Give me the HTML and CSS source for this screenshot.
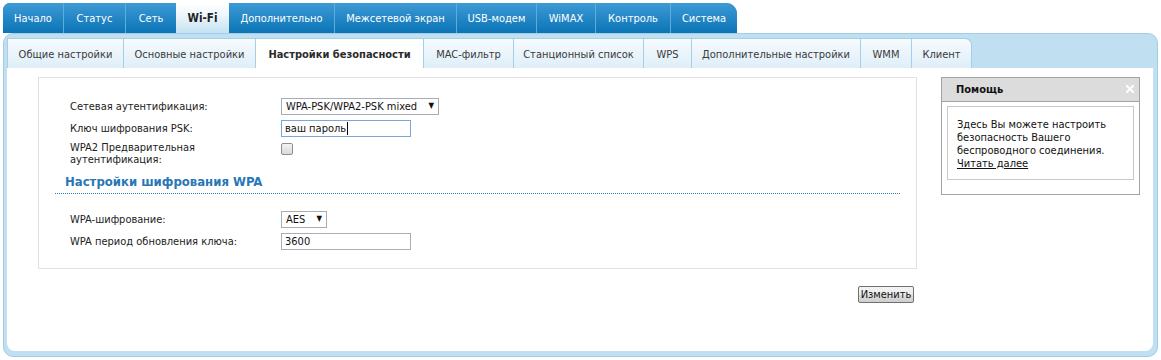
FILE: index.html
```html
<!DOCTYPE html>
<html lang="ru">
<head>
<meta charset="utf-8">
<title>Wi-Fi — Настройки безопасности</title>
<link rel="stylesheet" href="styles.css">
</head>
<body>
<div class="page">
  <nav class="topnav">
    <a class="tab">Начало</a>
    <a class="tab">Статус</a>
    <a class="tab">Сеть</a>
    <a class="tab active">Wi-Fi</a>
    <a class="tab">Дополнительно</a>
    <a class="tab">Межсетевой экран</a>
    <a class="tab">USB-модем</a>
    <a class="tab">WiMAX</a>
    <a class="tab">Контроль</a>
    <a class="tab last">Система</a>
  </nav>
  <div class="frame">
    <nav class="subnav">
      <a class="subtab">Общие настройки</a>
      <a class="subtab">Основные настройки</a>
      <a class="subtab active">Настройки безопасности</a>
      <a class="subtab">MAC-фильтр</a>
      <a class="subtab">Станционный список</a>
      <a class="subtab">WPS</a>
      <a class="subtab">Дополнительные настройки</a>
      <a class="subtab">WMM</a>
      <a class="subtab last">Клиент</a>
    </nav>
    <div class="content">
      <div class="main">
        <div class="formbox">
          <div class="row">
            <label class="lbl">Сетевая аутентификация:</label>
            <span class="select-wrap wide"><select class="sel"><option>WPA-PSK/WPA2-PSK mixed</option></select></span>
          </div>
          <div class="row">
            <label class="lbl">Ключ шифрования PSK:</label>
            <span class="txt focused">ваш пароль<span class="caret"></span></span>
          </div>
          <div class="row tall">
            <label class="lbl two">WPA2 Предварительная<br>аутентификация:</label>
            <input class="chk" type="checkbox">
          </div>
          <h3 class="section">Настройки шифрования WPA</h3>
          <div class="row">
            <label class="lbl">WPA-шифрование:</label>
            <span class="select-wrap narrow"><select class="sel"><option>AES</option></select></span>
          </div>
          <div class="row">
            <label class="lbl">WPA период обновления ключа:</label>
            <input class="txt" type="text" value="3600">
          </div>
        </div>
        <div class="actions">
          <button class="btn" type="button">Изменить</button>
        </div>
      </div>
      <aside class="help">
        <div class="help-head"><span>Помощь</span><svg class="close" width="8" height="8" viewBox="0 0 8 8"><path d="M1 1L7 7M7 1L1 7" stroke="#ffffff" stroke-width="2" stroke-linecap="square"/></svg></div>
        <div class="help-body">Здесь Вы можете настроить<br>безопасность Вашего<br>беспроводного соединения.<br><a class="more">Читать далее</a></div>
      </aside>
    </div>
  </div>
</div>
</body>
</html>
```
FILE: styles.css
```css
* { box-sizing: border-box; }
body {
  margin: 0;
  background: #ffffff;
  font-family: "DejaVu Sans Condensed", "DejaVu Sans", sans-serif;
  font-size: 11px;
  color: #222;
}
.page { padding: 3px 4px 0 3px; width: 1161px; }

/* top blue tabs */
.topnav {
  display: grid;
  grid-template-columns: 60px 62px 51px 53px 105px 122px 80px 59px 75px 67px;
  width: 734px;
  height: 30px;
  border-radius: 7px 11px 0 0;
  overflow: hidden;
  background: linear-gradient(#3e9bd5, #0a74b6);
}
.tab {
  display: flex;
  align-items: center;
  justify-content: center;
  color: #fff;
  font-size: 11px;
  border-left: 1px solid #5cacdc;
  background: linear-gradient(#3d9ad5, #0b74b6);
  cursor: pointer;
}
.tab:first-child { border-left: none; }
.tab.active {
  border-left: none;
  color: #222;
  font-weight: bold;
  font-size: 11.5px;
  background: linear-gradient(#ffffff 0%, #eef7fc 40%, #c4e1f2 100%);
}
.tab.active + .tab { border-left: none; }

/* light blue frame */
.frame {
  width: 1155px;
  height: 324px;
  background: #c0e0f1;
  border: 1px solid #a2cde7;
  border-radius: 10px;
  padding: 4px 4px 5px 3px;
  display: flex;
  flex-direction: column;
}
.subnav {
  display: grid;
  grid-template-columns: 116px 132px 168px 90px 130px 48px 169px 51px 61px;
  width: 965px;
  height: 30px;
}
.subtab {
  display: flex;
  align-items: center;
  justify-content: center;
  color: #3a3a3a;
  font-size: 11px;
  border-top: 1px solid #a4cfe9;
  border-left: 1px solid #a4cfe9;
  background: linear-gradient(#f7fbfe, #deeef8);
  cursor: pointer;
  padding-top: 1px;
}
.subtab.last { border-right: 1px solid #a4cfe9; border-top-right-radius: 7px; }
.subtab.active {
  background: #ffffff;
  font-weight: bold;
  color: #2b2b2b;
}

.content {
  flex: 1;
  background: #fff;
  border-radius: 0 0 8px 8px;
  display: flex;
  align-items: flex-start;
  gap: 24px;
  padding: 9px 13px 0 31px;
}

/* form */
.main { width: 879px; }
.formbox {
  border: 1px solid #e0e0e0;
  height: 192px;
  padding: 20px 16px 0 16px;
}
.row {
  display: grid;
  grid-template-columns: 211px auto;
  align-items: start;
  height: 22px;
  padding-left: 15px;
}
.row.tall { height: 30px; }
.lbl {
  line-height: 13px;
  padding-top: 2px;
  color: #222;
}
.lbl.two { line-height: 12px; padding-top: 0; }
.select-wrap { position: relative; display: inline-block; height: 17px; }
.select-wrap.wide { width: 158px; }
.select-wrap.narrow { width: 46px; }
.select-wrap::after {
  content: "▼";
  position: absolute;
  right: 5px;
  top: 3px;
  font-size: 8px;
  color: #111;
  pointer-events: none;
}
.sel {
  appearance: none;
  -webkit-appearance: none;
  width: 100%;
  height: 17px;
  border: 1px solid #a7adb6;
  border-radius: 0;
  background: #fff;
  font: inherit;
  font-size: 11px;
  color: #111;
  padding: 0 0 0 4px;
  line-height: 15px;
  outline: none;
}
.txt {
  display: inline-flex;
  align-items: center;
  width: 130px;
  height: 17px;
  border: 1px solid #abadb3;
  background: #fff;
  font: inherit;
  font-size: 11px;
  color: #111;
  padding: 0 3px;
  outline: none;
}
.txt.focused { border-color: #7aa7d9; }
.caret {
  display: inline-block;
  width: 1px;
  height: 13px;
  margin-left: 1px;
  background: #000;
}
.chk {
  appearance: none;
  -webkit-appearance: none;
  margin: 1px 0 0 0;
  width: 12px;
  height: 12px;
  border: 1px solid #8e8f8f;
  border-radius: 2px;
  background: linear-gradient(#f4f4f4, #d9d9d9);
}
.section {
  margin: 0;
  padding: 2px 0 3px 10px;
  font-size: 13px;
  line-height: 16px;
  font-weight: bold;
  color: #2777b6;
  border-bottom: 1px dotted #2a7bb8;
  margin-bottom: 17px;
}
.actions {
  display: flex;
  justify-content: flex-end;
  padding: 17px 3px 0 0;
}
.btn {
  width: 56px;
  height: 17px;
  padding: 0;
  font: inherit;
  font-size: 11px;
  color: #111;
  border: 1px solid #707070;
  border-radius: 2px;
  background: linear-gradient(#f3f3f3 0%, #ebebeb 50%, #dddddd 51%, #cfcfcf 100%);
}

/* help */
.help {
  width: 199px;
  border: 1px solid #a3a3a3;
}
.help-head {
  height: 24px;
  background: #dcdcdc;
  border-bottom: 1px solid #a3a3a3;
  display: flex;
  align-items: center;
  justify-content: space-between;
  padding: 0 5px 0 14px;
  font-weight: bold;
  color: #111;
}
.close { display: block; margin-top: -2px; }
.help-body {
  margin: 4px 5px 14px 5px;
  border: 1px solid #c8c8c8;
  padding: 11px 6px 7px 9px;
  line-height: 13px;
  color: #111;
  height: 74px;
}
.more { color: #111; text-decoration: underline; cursor: pointer; }
```
